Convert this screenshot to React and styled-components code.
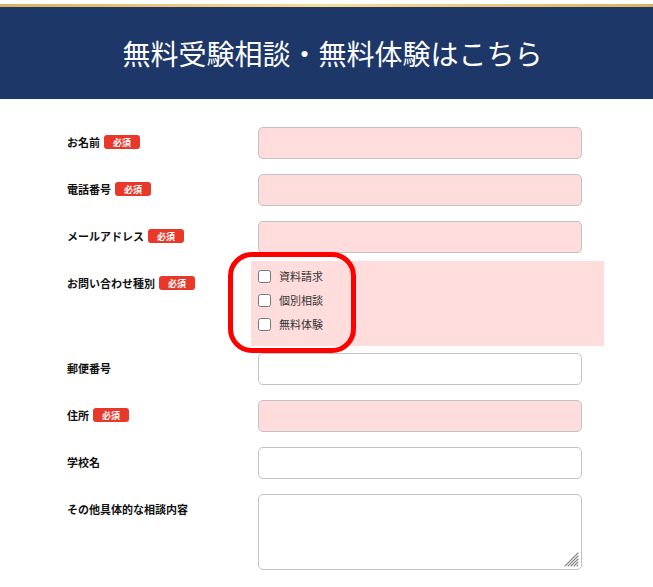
import React from "react";
import styled, { createGlobalStyle } from "styled-components";

const Global = createGlobalStyle`
  html, body { margin: 0; padding: 0; background: #fff; }
  body { font-family: "Noto Sans CJK JP", "Noto Sans", sans-serif; }
  * { box-sizing: border-box; }
`;

const Page = styled.div`
  padding-top: 4px;
  width: 653px;
`;

const Header = styled.header`
  border-top: 3px solid transparent;
  border-image: linear-gradient(90deg, #d9b25c, #f4dc98 50%, #d9b25c) 1;
  background: #1d3768;
  height: 95px;
  display: flex;
  align-items: center;
  justify-content: center;
  padding-left: 12px;
`;

const Title = styled.h1`
  margin: 0;
  color: #fff;
  font-weight: 400;
  font-size: 28px;
  line-height: 1;
  letter-spacing: 0;
`;

const Form = styled.form`
  padding-top: 21px;
  margin-left: 60px;
`;

const Row = styled.div`
  display: flex;
`;

const LabelCell = styled.div`
  width: 191px;
  padding: 14px 0 0 7px;
  display: flex;
  align-items: center;
  align-self: flex-start;
  gap: 4px;
  font-size: 11px;
  line-height: 16px;
  font-weight: 700;
  color: #111;
`;

const Badge = styled.span`
  display: inline-flex;
  align-items: center;
  justify-content: center;
  width: 36px;
  height: 14px;
  border-radius: 3px;
  background: #e8382a;
  color: #fff;
  font-size: 9px;
  font-weight: 700;
  line-height: 1;
`;

const FieldCell = styled.div`
  position: relative;
  width: 353px;
  padding: ${(p) => (p.$list ? "3px 7px 10px" : "7px 0 8px 7px")};
  background: ${(p) => (p.$pink ? "#ffdddd" : "transparent")};
`;

const TextInput = styled.input`
  display: block;
  width: 324px;
  height: 32px;
  margin: 0;
  border: 1px solid #c2c2c2;
  border-radius: 5px;
  background: ${(p) => (p.$required ? "#ffdddd" : "#fff")};
  font-family: inherit;
  font-size: 13px;
  padding: 0 8px;
  outline: none;
`;

const AreaWrap = styled.div`
  position: relative;
  width: 324px;
`;

const TextArea = styled.textarea`
  display: block;
  width: 324px;
  height: 76px;
  margin: 0;
  border: 1px solid #c2c2c2;
  border-radius: 5px;
  background: #fff;
  font-family: inherit;
  font-size: 13px;
  padding: 6px 8px;
  outline: none;
  resize: none;
`;

const Grip = styled.svg`
  position: absolute;
  right: 3px;
  bottom: 3px;
  width: 15px;
  height: 15px;
  pointer-events: none;
`;

const CheckItem = styled.label`
  display: flex;
  align-items: center;
  gap: 8px;
  height: 24px;
  font-size: 11px;
  color: #333;
`;

const CheckBox = styled.input`
  margin: 0;
  width: 13px;
  height: 13px;
`;

const Highlight = styled.div`
  position: absolute;
  left: -23px;
  top: -9px;
  width: 128px;
  height: 101px;
  border: 5px solid #ff0000;
  border-radius: 24px;
  pointer-events: none;
`;

const fields = [
  { label: "お名前", req: true },
  { label: "電話番号", req: true },
  { label: "メールアドレス", req: true },
  { label: "お問い合わせ種別", req: true, type: "check" },
  { label: "郵便番号", req: false },
  { label: "住所", req: true },
  { label: "学校名", req: false },
  { label: "その他具体的な相談内容", req: false, type: "area" },
];

export default function App() {
  return (
    <Page>
      <Global />
      <Header>
        <Title>無料受験相談・無料体験はこちら</Title>
      </Header>
      <Form onSubmit={(e) => e.preventDefault()}>
        {fields.map((f) => (
          <Row key={f.label}>
            <LabelCell>
              {f.label}
              {f.req && <Badge>必須</Badge>}
            </LabelCell>
            {f.type === "check" ? (
              <FieldCell $pink $list>
                {["資料請求", "個別相談", "無料体験"].map((c) => (
                  <CheckItem key={c}>
                    <CheckBox type="checkbox" />
                    {c}
                  </CheckItem>
                ))}
                <Highlight />
              </FieldCell>
            ) : f.type === "area" ? (
              <FieldCell>
                <AreaWrap>
                  <TextArea />
                  <Grip viewBox="0 0 15 15">
                    <g stroke="#8a8a8a" strokeWidth="1.1" strokeLinecap="round">
                      <line x1="14" y1="1" x2="1" y2="14" />
                      <line x1="14" y1="4" x2="4" y2="14" />
                      <line x1="14" y1="7" x2="7" y2="14" />
                      <line x1="14" y1="10" x2="10" y2="14" />
                      <line x1="14" y1="13" x2="13" y2="14" />
                    </g>
                  </Grip>
                </AreaWrap>
              </FieldCell>
            ) : (
              <FieldCell>
                <TextInput type="text" $required={f.req} />
              </FieldCell>
            )}
          </Row>
        ))}
      </Form>
    </Page>
  );
}
